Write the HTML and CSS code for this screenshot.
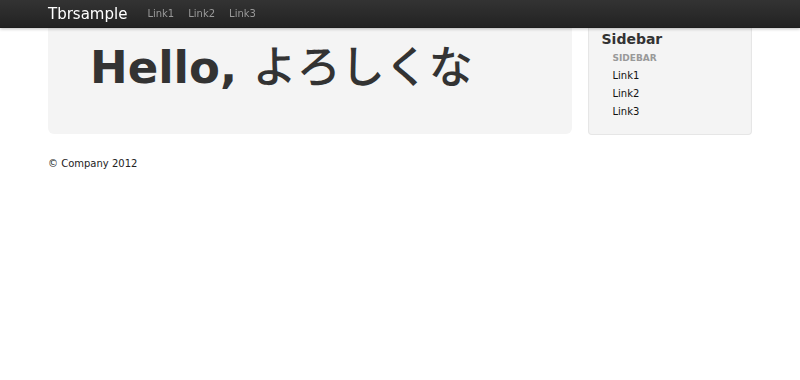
FILE: index.html
```html
<!DOCTYPE html>
<html lang="ja">
<head>
<meta charset="utf-8">
<title>Tbrsample</title>
<link rel="stylesheet" href="styles.css">
</head>
<body>
<div class="navbar">
  <div class="navbar-inner">
    <a class="brand" href="#">Tbrsample</a>
    <ul class="nav">
      <li><a href="#">Link1</a></li>
      <li><a href="#">Link2</a></li>
      <li><a href="#">Link3</a></li>
    </ul>
  </div>
</div>
<div class="container">
  <div class="row">
    <div class="main">
      <div class="hero">
        <h1>Hello, <span class="ja">よろしくな</span></h1>
      </div>
    </div>
    <div class="side">
      <div class="well">
        <h3 class="side-title">Sidebar</h3>
        <ul class="nav-list">
          <li class="nav-header">Sidebar</li>
          <li><a href="#">Link1</a></li>
          <li><a href="#">Link2</a></li>
          <li><a href="#">Link3</a></li>
        </ul>
      </div>
    </div>
  </div>
  <footer class="footer">
    <p>&copy; Company 2012</p>
  </footer>
</div>
</body>
</html>
```
FILE: styles.css
```css
html, body {
  margin: 0;
  padding: 0;
}
body {
  font-family: "DejaVu Sans", Verdana, "Noto Sans CJK JP", sans-serif;
  font-size: 10px;
  line-height: 18px;
  color: #333;
  background: #fff;
}
a {
  text-decoration: none;
}
ul {
  list-style: none;
  margin: 0;
  padding: 0;
}
.navbar {
  position: fixed;
  top: 0;
  left: 0;
  right: 0;
  z-index: 10;
}
.navbar-inner {
  height: 28px;
  display: flex;
  align-items: center;
  padding: 0 48px;
  background: linear-gradient(to bottom, #333333, #222222);
  box-shadow: 0 1px 3px rgba(0, 0, 0, 0.25), inset 0 -1px 0 rgba(0, 0, 0, 0.1);
}
.brand {
  color: #ffffff;
  font-size: 15px;
  line-height: 28px;
  margin-right: 20px;
}
.nav {
  display: flex;
  gap: 14px;
}
.nav a {
  color: #999999;
  font-size: 10px;
  line-height: 28px;
}
.container {
  padding: 0 48px;
}
.row {
  display: flex;
  gap: 16px;
}
.main {
  flex: 0 0 523.5px;
}
.side {
  flex: 1 1 auto;
}
.hero {
  height: 134px;
  box-sizing: border-box;
  padding: 45px 40px 0 42px;
  background: #f4f4f4;
  border-radius: 0 0 6px 6px;
}
.hero h1 {
  margin: 0;
  font-size: 45px;
  line-height: 45px;
  font-weight: bold;
  color: #333;
  white-space: nowrap;
}
.hero .ja {
  font-family: "Noto Sans CJK JP", sans-serif;
  font-weight: 500;
  font-size: 44px;
  line-height: 0;
}
.well {
  height: 135px;
  box-sizing: border-box;
  padding: 30px 13px 0;
  background: #f4f4f4;
  border: 1px solid #e6e6e6;
  border-top: none;
  border-radius: 0 0 4px 4px;
  box-shadow: inset 0 1px 1px rgba(0, 0, 0, 0.05);
}
.side-title {
  margin: 0;
  font-size: 14px;
  line-height: 19px;
  font-weight: bold;
  color: #333;
}
.nav-list {
  padding-left: 11px;
}
.nav-list li {
  line-height: 18px;
}
.nav-header {
  font-size: 9px;
  font-weight: bold;
  color: #999999;
  text-transform: uppercase;
}
.nav-list a {
  color: #111;
  font-size: 10px;
}
.footer {
  margin-top: 20px;
}
.footer p {
  margin: 0;
  color: #222;
}
```
